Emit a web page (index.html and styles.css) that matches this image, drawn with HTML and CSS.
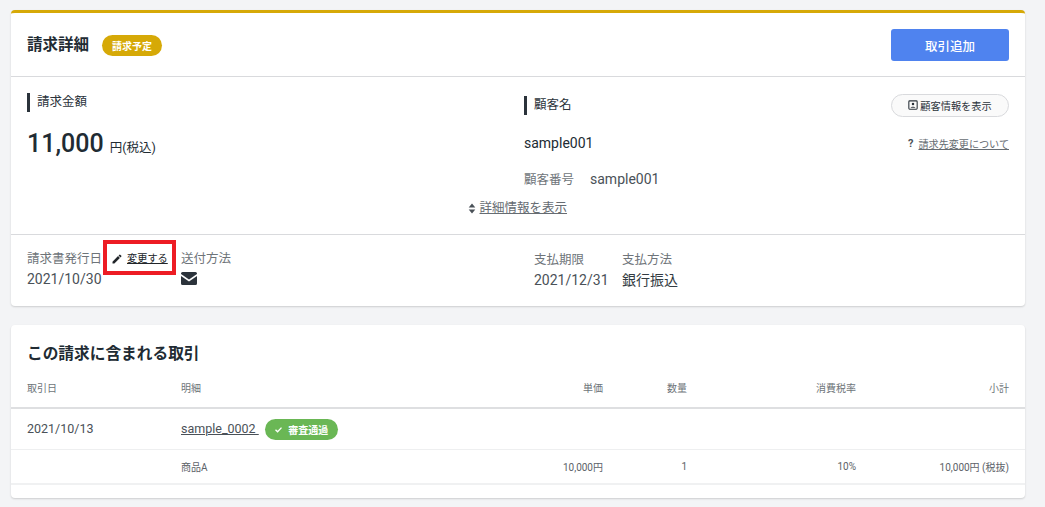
FILE: index.html
```html
<!DOCTYPE html>
<html lang="ja">
<head>
<meta charset="utf-8">
<title>請求詳細</title>
<link rel="stylesheet" href="styles.css">
</head>
<body>
<main class="page">
  <section class="card card-top">
    <header class="head">
      <div class="head-left">
        <h1 class="title">請求詳細</h1>
        <span class="pill pill-gold">請求予定</span>
      </div>
      <button class="primary">取引追加</button>
    </header>
    <div class="summary">
      <div class="summary-grid">
        <div class="col-left">
          <h2 class="mark mark-amount">請求金額</h2>
          <p class="amount"><span class="amount-num">11,000</span><span class="amount-unit">円(税込)</span></p>
        </div>
        <div class="col-right">
          <div class="row-between row-name">
            <h2 class="mark">顧客名</h2>
            <button class="ghost">
              <svg class="i-contact" viewBox="0 0 12 12" width="10" height="10"><rect x="1" y="1" width="10" height="10" rx="1" fill="none" stroke="#2b333b" stroke-width="1.300"/><circle cx="6" cy="4.800" r="1.500" fill="#2b333b"/><path d="M3.200 9.200c.4-1.600 5.200-1.600 5.600 0z" fill="#2b333b"/></svg>顧客情報を表示
            </button>
          </div>
          <div class="row-between row-sample">
            <span class="cust">sample001</span>
            <span class="help"><b class="q">?</b><a class="link-grey">請求先変更について</a></span>
          </div>
          <div class="cust-no"><span class="muted">顧客番号</span><span class="cust-val">sample001</span></div>
        </div>
      </div>
      <div class="more">
        <svg viewBox="0 0 10 14" width="8" height="11"><path d="M5 0.500 9.200 5.600H.8zM5 13.500.8 8.400h8.400z" fill="#4a5158"/></svg><a class="link-grey">詳細情報を表示</a>
      </div>
    </div>
    <div class="meta">
      <div class="meta-issue">
        <div class="meta-label-row">
          <span class="muted">請求書発行日</span>
          <a class="edit"><svg viewBox="0 0 24 24" width="12" height="12"><path d="M3 17.250V21h3.750L17.810 9.940l-3.750-3.750L3 17.250zM20.710 7.040a1 1 0 0 0 0-1.410l-2.340-2.340a1 1 0 0 0-1.410 0l-1.830 1.830 3.750 3.750 1.830-1.830z" fill="#212529"/></svg><span class="edit-text">変更する</span></a>
        </div>
        <div class="val">2021/10/30</div>
      </div>
      <div class="meta-send">
        <span class="muted">送付方法</span>
        <svg class="mail" viewBox="0 0 16 13" width="16" height="13"><path d="M1.500 0h13A1.500 1.500 0 0 1 16 1.500v.6L8 7.600 0 2.100v-.6A1.500 1.500 0 0 1 1.500 0z" fill="#2b333b"/><path d="M0 3.900 8 9.400l8-5.500v7.600a1.500 1.500 0 0 1-1.500 1.500h-13A1.500 1.500 0 0 1 0 11.500z" fill="#2b333b"/></svg>
      </div>
      <div class="meta-due">
        <span class="muted">支払期限</span>
        <div class="val">2021/12/31</div>
      </div>
      <div class="meta-pay">
        <span class="muted">支払方法</span>
        <div class="val val-dark">銀行振込</div>
      </div>
      <div class="callout"></div>
    </div>
  </section>

  <section class="card card-bottom">
    <h2 class="sub-title">この請求に含まれる取引</h2>
    <div class="t-row t-head">
      <span>取引日</span><span>明細</span><span class="r">単価</span><span class="r">数量</span><span class="r">消費税率</span><span class="r">小計</span>
    </div>
    <div class="t-row t-main">
      <span class="t-date">2021/10/13</span>
      <span class="t-detail"><a class="t-link">sample_0002&nbsp;</a><span class="pill pill-green"><svg viewBox="0 0 12 12" width="9" height="9"><path d="M2 6.300 4.800 9 10 3.500" fill="none" stroke="#fff" stroke-width="1.800"/></svg>審査通過</span></span>
    </div>
    <div class="t-row t-item">
      <span></span><span>商品A</span><span class="r">10,000円</span><span class="r">1</span><span class="r">10%</span><span class="r">10,000円 (税抜)</span>
    </div>
  </section>
</main>
</body>
</html>
```

FILE: styles.css
```css
* { box-sizing: border-box; }
html, body { margin: 0; height: 100%; }
body {
  background: #f3f4f6;
  color: #212b33;
  font-family: Roboto, "Noto Sans CJK JP", sans-serif;
  overflow: hidden;
}
.page {
  width: 1014px;
  margin-left: 11px;
  padding-top: 10px;
  display: flex;
  flex-direction: column;
  gap: 19px;
}
.card {
  background: #fff;
  border-radius: 4px;
  box-shadow: 0 1px 2px rgba(0, 0, 0, .16);
}
.card-top { border-top: 3px solid #d6a907; height: 296px; display: flex; flex-direction: column; }
.card-bottom { height: 173px; }

.head {
  height: 64px;
  padding: 0 16px;
  display: flex;
  align-items: center;
  justify-content: space-between;
  border-bottom: 1px solid #d9dadd;
}
.head-left { display: flex; align-items: center; gap: 13px; padding-top: 1px; }
.title { margin: 0; font-size: 15.500px; font-weight: 700; line-height: 20px; }
.pill {
  display: inline-flex;
  align-items: center;
  justify-content: center;
  color: #fff;
  font-size: 10px;
  font-weight: 700;
  border-radius: 11px;
}
.pill-gold { background: #d6a907; width: 60px; height: 21px; }
.pill-green { background: #6ab755; width: 73px; height: 21px; gap: 5px; margin-left: 6px; }
.primary {
  width: 118px;
  height: 32px;
  margin-top: 1px;
  background: #4f83ef;
  color: #fff;
  border: 0;
  border-radius: 3px;
  font: 500 12.500px Roboto, "Noto Sans CJK JP", sans-serif;
}

.summary { height: 158px; padding: 0 16px; border-bottom: 1px solid #d9dadd; position: relative; }
.summary-grid { display: grid; grid-template-columns: 497px 485px; }
.mark {
  margin: 0;
  border-left: 3px solid #2b333b;
  padding-left: 7px;
  height: 19px;
  line-height: 17px;
  font-size: 12.500px;
  font-weight: 400;
  color: #2b333b;
}
.mark-amount { margin-top: 16px; }
.amount { margin: 15px 0 0; display: flex; align-items: baseline; height: 33px; }
.amount-num { font-size: 25px; font-weight: 500; line-height: 33px; }
.amount-unit { font-size: 12.500px; font-weight: 400; margin-left: 6px; }
.col-right { padding-top: 16px; }
.row-between { display: flex; align-items: center; justify-content: space-between; }
.row-name { height: 24px; margin-top: 0; }
.ghost {
  width: 118px;
  height: 23px;
  display: inline-flex;
  align-items: center;
  justify-content: center;
  gap: 2px;
  background: #fafafa;
  color: #2b333b;
  border: 1px solid #d9dadd;
  border-radius: 12px;
  padding: 0;
  font: 400 10.200px Roboto, "Noto Sans CJK JP", sans-serif;
}
.row-sample { margin-top: 16px; height: 20px; }
.cust { font-size: 14px; font-weight: 400; color: #212b33; }
.help { display: inline-flex; align-items: center; gap: 5px; font-size: 10.100px; }
.q { font-size: 11px; color: #4a5158; }
.link-grey { color: #666c72; text-decoration: underline; }
.cust-no { margin-top: 15px; height: 22px; font-size: 14px; line-height: 22px; }
.muted { color: #6e7479; font-size: 12.500px; }
.cust-val { margin-left: 16px; color: #4a5158; }
.more {
  position: absolute;
  left: 457px;
  top: 122px;
  display: flex;
  align-items: center;
  gap: 3.500px;
  font-size: 12.500px;
  line-height: 18px;
}

.meta {
  flex: 1;
  position: relative;
  display: grid;
  grid-template-columns: 154px 353px 88px 1fr;
  padding: 15px 16px 0;
  line-height: 18px;
}
.meta-label-row { display: flex; align-items: center; gap: 9px; height: 18px; white-space: nowrap; }
.edit { display: inline-flex; align-items: center; font-size: 10.200px; color: #212529; }
.edit-text { text-decoration: underline; margin-left: 4px; }
.val { font-size: 14px; line-height: 20px; margin-top: 1px; color: #4a5158; }
.val-dark { color: #333b42; }
.meta-send { display: flex; flex-direction: column; align-items: flex-start; }
.mail { margin-top: 4px; }
.callout {
  position: absolute;
  left: 92px;
  top: 5px;
  width: 73px;
  height: 35px;
  border: 4px solid #ed1c24;
}

.sub-title { margin: 0; padding: 19px 16px 0; font-size: 15.700px; font-weight: 700; line-height: 20px; }
.t-row {
  display: grid;
  grid-template-columns: 154px 322px 100px 84px 169px 153px;
  padding: 0 16px;
  align-items: center;
}
.r { text-align: right; }
.t-head { height: 45px; padding-top: 3px; font-size: 10px; color: #6e7479; border-bottom: 2px solid #dedfe1; }
.t-main { height: 41px; border-bottom: 1px solid #eeeff0; font-size: 12.500px; color: #4a5158; }
.t-date { padding-bottom: 2px; }
.t-detail { display: flex; align-items: center; grid-column: 2 / 7; }
.t-link { text-decoration: underline; color: #4a5158; padding-bottom: 2px; }
.t-item { height: 35px; font-size: 10px; color: #5c6268; border-bottom: 2px solid #f0f1f2; }
```
